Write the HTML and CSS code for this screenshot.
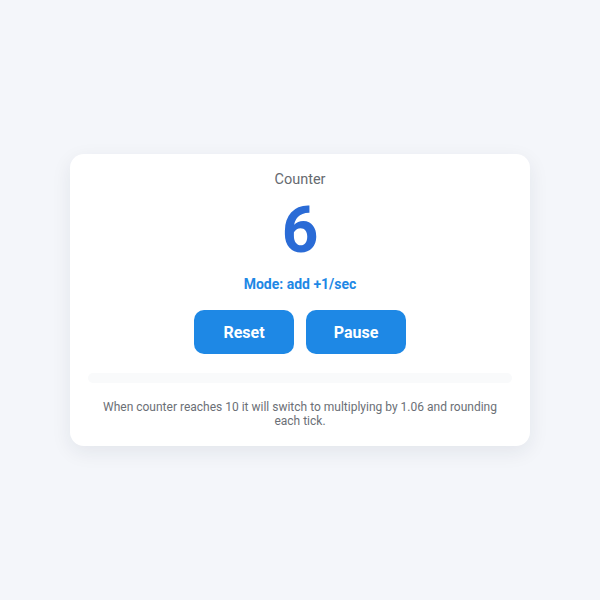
FILE: index.html
```html
<!DOCTYPE html>
<html>
<head>
<meta charset="utf-8">
<link rel="stylesheet" href="styles.css">
</head>
<body>
<main class="page">
  <section class="card">
    <div class="label">Counter</div>
    <div class="value">6</div>
    <div class="mode">Mode: add +1/sec</div>
    <div class="actions">
      <button class="btn">Reset</button>
      <button class="btn">Pause</button>
    </div>
    <div class="track"></div>
    <p class="note">When counter reaches 10 it will switch to multiplying by 1.06 and rounding each tick.</p>
  </section>
</main>
</body>
</html>
```
FILE: styles.css
```css
* { box-sizing: border-box; }
html, body { margin: 0; padding: 0; }
body {
  background: #f4f6fa;
  font-family: Roboto, "Liberation Sans", sans-serif;
}
.page {
  height: 600px;
  display: flex;
  align-items: center;
  justify-content: center;
}
.card {
  width: 460px;
  background: #ffffff;
  border-radius: 14px;
  box-shadow: 0 6px 20px rgba(30, 40, 70, 0.08);
  padding: 17px 18px 18px;
  display: flex;
  flex-direction: column;
  align-items: center;
}
.label {
  font-size: 14.5px;
  line-height: 18px;
  color: #666a70;
}
.value {
  margin-top: 10px;
  font-size: 64px;
  line-height: 64px;
  font-weight: 700;
  color: #2a6bd6;
}
.mode {
  margin-top: 11px;
  font-size: 14px;
  line-height: 20px;
  font-weight: 700;
  color: #1e88e5;
}
.actions {
  margin-top: 16px;
  display: flex;
  gap: 12px;
}
.btn {
  width: 100px;
  height: 44px;
  border: none;
  border-radius: 10px;
  background: #1e88e5;
  color: #ffffff;
  font-family: Roboto, "Liberation Sans", sans-serif;
  font-size: 16px;
  font-weight: 700;
}
.track {
  margin-top: 19px;
  width: 100%;
  height: 10px;
  border-radius: 5px;
  background: #f9fafb;
}
.note {
  margin: 17px 0 0;
  padding: 0 10px;
  font-size: 12px;
  line-height: 14px;
  color: #6b6f76;
  text-align: center;
}
```
